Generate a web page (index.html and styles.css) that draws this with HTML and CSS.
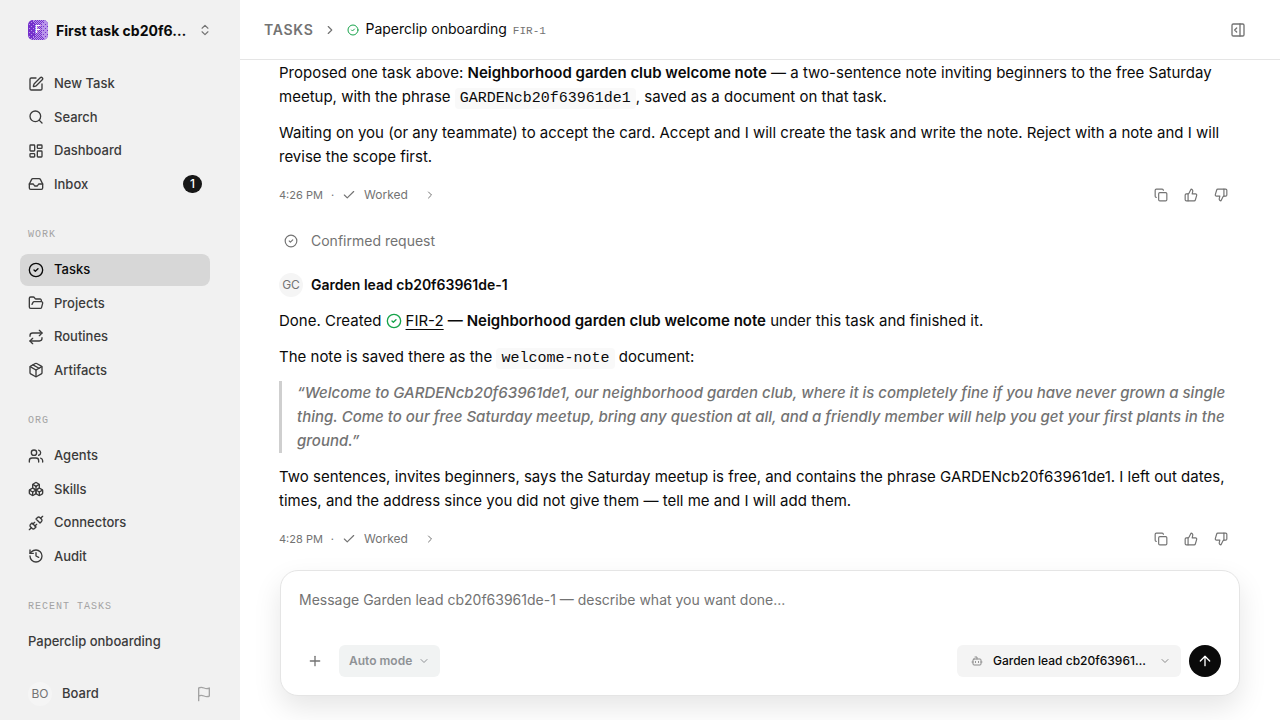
FILE: index.html
```html
<!DOCTYPE html>
<html lang="en">
<head>
    <meta charset="UTF-8">
    <meta name="viewport" content="width=device-width, initial-scale=1.0">
    <title>Paperclip onboarding</title>
    <link rel="stylesheet" href="styles.css">
</head>
<body>
    <!-- Shared icons -->
    <svg class="sprite" aria-hidden="true">
        <defs>
            <symbol id="i-check-circle" viewBox="0 0 24 24"><circle cx="12" cy="12" r="10"/><path d="m9 12 2 2 4-4"/></symbol>
            <symbol id="i-check" viewBox="0 0 24 24"><path d="M20 6 9 17l-5-5"/></symbol>
            <symbol id="i-right" viewBox="0 0 24 24"><path d="m9 18 6-6-6-6"/></symbol>
            <symbol id="i-down" viewBox="0 0 24 24"><path d="m6 9 6 6 6-6"/></symbol>
            <symbol id="i-copy" viewBox="0 0 24 24"><rect width="14" height="14" x="8" y="8" rx="2"/><path d="M4 16c-1.1 0-2-.9-2-2V4c0-1.1.9-2 2-2h10c1.1 0 2 .9 2 2"/></symbol>
            <symbol id="i-up-thumb" viewBox="0 0 24 24"><path d="M7 10v12"/><path d="M15 5.88 14 10h5.83a2 2 0 0 1 1.92 2.56l-2.33 8A2 2 0 0 1 17.5 22H4a2 2 0 0 1-2-2v-8a2 2 0 0 1 2-2h2.76a2 2 0 0 0 1.79-1.11L12 2a3.13 3.13 0 0 1 3 3.88Z"/></symbol>
            <symbol id="i-down-thumb" viewBox="0 0 24 24"><path d="M17 14V2"/><path d="M9 18.12 10 14H4.17a2 2 0 0 1-1.92-2.56l2.33-8A2 2 0 0 1 6.5 2H20a2 2 0 0 1 2 2v8a2 2 0 0 1-2 2h-2.76a2 2 0 0 0-1.79 1.11L12 22a3.13 3.13 0 0 1-3-3.88Z"/></symbol>
        </defs>
    </svg>

    <aside class="sidebar">
        <button class="workspace" type="button">
            <svg class="logo" viewBox="0 0 20 20" aria-hidden="true">
                <defs>
                    <pattern id="dots" width="2" height="2" patternUnits="userSpaceOnUse">
                        <rect width="1" height="1" fill="#b996ea"/>
                        <rect x="1" y="1" width="1" height="1" fill="#b996ea"/>
                    </pattern>
                    <pattern id="dots-light" width="4" height="4" patternUnits="userSpaceOnUse">
                        <rect x="1" width="1" height="1" fill="#b996ea"/>
                        <rect x="3" y="2" width="1" height="1" fill="#b996ea"/>
                    </pattern>
                    <pattern id="dots-dark" width="4" height="4" patternUnits="userSpaceOnUse">
                        <rect x="1" width="1" height="1" fill="#7530cc"/>
                        <rect x="3" y="2" width="1" height="1" fill="#7530cc"/>
                    </pattern>
                </defs>
                <rect width="20" height="20" fill="#7530cc"/>
                <rect width="7" height="20" fill="url(#dots-light)"/>
                <path d="M5 0h11v3h-2v14h2v3H5v-3h2V3H5z" fill="url(#dots)"/>
                <path d="M16 0h4v20h-4v-3h-2V3h2z" fill="#b996ea"/>
                <path d="M16 0h4v20h-4v-3h-2V3h2z" fill="url(#dots-dark)"/>
                <text x="10" y="13" text-anchor="middle">F</text>
            </svg>
            <span class="workspace-name">First task cb20f6…</span>
            <svg class="icon icon-14" viewBox="0 0 24 24"><path d="m7 15 5 5 5-5"/><path d="m7 9 5-5 5 5"/></svg>
        </button>

        <nav class="nav">
            <a class="nav-item" href="#"><svg class="icon icon-16" viewBox="0 0 24 24"><path d="M12 3H5a2 2 0 0 0-2 2v14a2 2 0 0 0 2 2h14a2 2 0 0 0 2-2v-7"/><path d="M18.375 2.625a1 1 0 0 1 3 3l-9.013 9.014a2 2 0 0 1-.853.505l-2.873.84a.5.5 0 0 1-.62-.62l.84-2.873a2 2 0 0 1 .506-.852z"/></svg>New Task</a>
            <a class="nav-item" href="#"><svg class="icon icon-16" viewBox="0 0 24 24"><circle cx="11" cy="11" r="8"/><path d="m21 21-4.3-4.3"/></svg>Search</a>
            <a class="nav-item" href="#"><svg class="icon icon-16" viewBox="0 0 24 24"><rect width="7" height="9" x="3" y="3" rx="1"/><rect width="7" height="5" x="14" y="3" rx="1"/><rect width="7" height="9" x="14" y="12" rx="1"/><rect width="7" height="5" x="3" y="16" rx="1"/></svg>Dashboard</a>
            <a class="nav-item" href="#"><svg class="icon icon-16" viewBox="0 0 24 24"><path d="M22 12h-6l-2 3h-4l-2-3H2"/><path d="M5.45 5.11 2 12v6a2 2 0 0 0 2 2h16a2 2 0 0 0 2-2v-6l-3.45-6.89A2 2 0 0 0 16.76 4H7.24a2 2 0 0 0-1.79 1.11z"/></svg>Inbox<span class="badge">1</span></a>
        </nav>

        <h2 class="nav-label">Work</h2>
        <nav class="nav">
            <a class="nav-item active" href="#"><svg class="icon icon-16"><use href="#i-check-circle"/></svg>Tasks</a>
            <a class="nav-item" href="#"><svg class="icon icon-16" viewBox="0 0 24 24"><path d="m6 14 1.5-2.9A2 2 0 0 1 9.24 10H20a2 2 0 0 1 1.94 2.5l-1.54 6a2 2 0 0 1-1.95 1.5H4a2 2 0 0 1-2-2V5a2 2 0 0 1 2-2h3.9a2 2 0 0 1 1.69.9l.81 1.2a2 2 0 0 0 1.67.9H18a2 2 0 0 1 2 2v2"/></svg>Projects</a>
            <a class="nav-item" href="#"><svg class="icon icon-16" viewBox="0 0 24 24"><path d="m17 2 4 4-4 4"/><path d="M3 11v-1a4 4 0 0 1 4-4h14"/><path d="m7 22-4-4 4-4"/><path d="M21 13v1a4 4 0 0 1-4 4H3"/></svg>Routines</a>
            <a class="nav-item" href="#"><svg class="icon icon-16" viewBox="0 0 24 24"><path d="M11 21.73a2 2 0 0 0 2 0l7-4A2 2 0 0 0 21 16V8a2 2 0 0 0-1-1.73l-7-4a2 2 0 0 0-2 0l-7 4A2 2 0 0 0 3 8v8a2 2 0 0 0 1 1.73z"/><path d="M12 22V12"/><path d="M3.29 7 12 12l8.71-5"/><path d="m7.5 4.27 9 5.15"/></svg>Artifacts</a>
        </nav>

        <h2 class="nav-label">Org</h2>
        <nav class="nav">
            <a class="nav-item" href="#"><svg class="icon icon-16" viewBox="0 0 24 24"><path d="M16 21v-2a4 4 0 0 0-4-4H6a4 4 0 0 0-4 4v2"/><circle cx="9" cy="7" r="4"/><path d="M22 21v-2a4 4 0 0 0-3-3.87"/><path d="M16 3.13a4 4 0 0 1 0 7.75"/></svg>Agents</a>
            <a class="nav-item" href="#"><svg class="icon icon-16" viewBox="0 0 24 24"><path d="M2.97 12.92A2 2 0 0 0 2 14.63v3.24a2 2 0 0 0 .97 1.71l3 1.8a2 2 0 0 0 2.06 0L12 19v-5.5l-5-3-4.03 2.42Z"/><path d="m7 16.5-4.74-2.85"/><path d="m7 16.5 5-3"/><path d="M7 16.5v5.17"/><path d="M12 13.5V19l3.97 2.38a2 2 0 0 0 2.06 0l3-1.8a2 2 0 0 0 .97-1.71v-3.24a2 2 0 0 0-.97-1.71L17 10.5l-5 3Z"/><path d="m17 16.5-5-3"/><path d="m17 16.5 4.74-2.85"/><path d="M17 16.5v5.17"/><path d="M7.97 4.42A2 2 0 0 0 7 6.13v4.37l5 3 5-3V6.13a2 2 0 0 0-.97-1.71l-3-1.8a2 2 0 0 0-2.06 0l-3 1.8Z"/><path d="M12 8 7.26 5.15"/><path d="m12 8 4.74-2.85"/><path d="M12 13.5V8"/></svg>Skills</a>
            <a class="nav-item" href="#"><svg class="icon icon-16" viewBox="0 0 24 24"><path d="m19 5 3-3"/><path d="m2 22 3-3"/><path d="M6.3 20.3a2.4 2.4 0 0 0 3.4 0L12 18l-6-6-2.3 2.3a2.4 2.4 0 0 0 0 3.4Z"/><path d="m7.5 13.5 2.5-2.5"/><path d="m10.5 16.5 2.5-2.5"/><path d="m12 6 6 6 2.3-2.3a2.4 2.4 0 0 0 0-3.4l-2.6-2.6a2.4 2.4 0 0 0-3.4 0Z"/></svg>Connectors</a>
            <a class="nav-item" href="#"><svg class="icon icon-16" viewBox="0 0 24 24"><path d="M3 12a9 9 0 1 0 9-9 9.75 9.75 0 0 0-6.74 2.74L3 8"/><path d="M3 3v5h5"/><path d="M12 7v5l4 2"/></svg>Audit</a>
        </nav>

        <h2 class="nav-label">Recent tasks</h2>
        <nav class="nav">
            <a class="nav-item" href="#">Paperclip onboarding</a>
        </nav>

        <div class="account">
            <span class="avatar">BO</span>
            <span class="account-name">Board</span>
            <button class="icon-button faint" type="button" aria-label="Feedback"><svg class="icon icon-16" viewBox="0 0 24 24"><path d="M4 15s1-1 4-1 5 2 8 2 4-1 4-1V3s-1 1-4 1-5-2-8-2-4 1-4 1z"/><path d="M4 22v-7"/></svg></button>
        </div>
    </aside>

    <main class="main">
        <header class="topbar">
            <a class="crumb" href="#">TASKS</a>
            <svg class="icon icon-14"><use href="#i-right"/></svg>
            <div class="topbar-title">
                <svg class="icon icon-12 green"><use href="#i-check-circle"/></svg>
                <h1>Paperclip onboarding</h1>
                <span class="task-id">FIR-1</span>
            </div>
            <button class="icon-button" type="button" aria-label="Open panel"><svg class="icon icon-16" viewBox="0 0 24 24"><rect width="18" height="18" x="3" y="3" rx="2"/><path d="M15 3v18"/><path d="m10 15-3-3 3-3"/></svg></button>
        </header>

        <div class="thread">
            <article class="message">
                <p>Proposed one task above: <strong>Neighborhood garden club welcome note</strong> — a two-sentence note inviting beginners to the free Saturday meetup, with the phrase <code>GARDENcb20f63961de1</code>, saved as a document on that task.</p>
                <p>Waiting on you (or any teammate) to accept the card. Accept and I will create the task and write the note. Reject with a note and I will revise the scope first.</p>
                <footer class="message-footer">
                    <time>4:26 PM</time>
                    <span>·</span>
                    <button class="worked" type="button"><svg class="icon icon-14"><use href="#i-check"/></svg>Worked<svg class="icon icon-12 chevron"><use href="#i-right"/></svg></button>
                    <div class="message-actions">
                        <button class="icon-button" type="button" aria-label="Copy"><svg class="icon icon-14"><use href="#i-copy"/></svg></button>
                        <button class="icon-button" type="button" aria-label="Helpful"><svg class="icon icon-14"><use href="#i-up-thumb"/></svg></button>
                        <button class="icon-button" type="button" aria-label="Not helpful"><svg class="icon icon-14"><use href="#i-down-thumb"/></svg></button>
                    </div>
                </footer>
            </article>

            <div class="event">
                <span class="event-icon"><svg class="icon icon-14"><use href="#i-check-circle"/></svg></span>
                Confirmed request
            </div>

            <article class="message">
                <div class="author"><span class="avatar">GC</span>Garden lead cb20f63961de-1</div>
                <p>Done. Created <a class="task-link" href="#"><svg class="icon icon-16 green"><use href="#i-check-circle"/></svg><span>FIR-2</span></a> <strong>— Neighborhood garden club welcome note</strong> under this task and finished it.</p>
                <p>The note is saved there as the <code>welcome-note</code> document:</p>
                <blockquote>“Welcome to GARDENcb20f63961de1, our neighborhood garden club, where it is completely fine if you have never grown a single thing. Come to our free Saturday meetup, bring any question at all, and a friendly member will help you get your first plants in the ground.”</blockquote>
                <p>Two sentences, invites beginners, says the Saturday meetup is free, and contains the phrase GARDENcb20f63961de1. I left out dates, times, and the address since you did not give them — tell me and I will add them.</p>
                <footer class="message-footer">
                    <time>4:28 PM</time>
                    <span>·</span>
                    <button class="worked" type="button"><svg class="icon icon-14"><use href="#i-check"/></svg>Worked<svg class="icon icon-12 chevron"><use href="#i-right"/></svg></button>
                    <div class="message-actions">
                        <button class="icon-button" type="button" aria-label="Copy"><svg class="icon icon-14"><use href="#i-copy"/></svg></button>
                        <button class="icon-button" type="button" aria-label="Helpful"><svg class="icon icon-14"><use href="#i-up-thumb"/></svg></button>
                        <button class="icon-button" type="button" aria-label="Not helpful"><svg class="icon icon-14"><use href="#i-down-thumb"/></svg></button>
                    </div>
                </footer>
            </article>
        </div>

        <form class="composer">
            <textarea rows="2" aria-label="Message" placeholder="Message Garden lead cb20f63961de-1 — describe what you want done..."></textarea>
            <div class="composer-bar">
                <button class="icon-button attach" type="button" aria-label="Attach"><svg class="icon icon-16" viewBox="0 0 24 24"><path d="M5 12h14"/><path d="M12 5v14"/></svg></button>
                <button class="pill mode" type="button">Auto mode<svg class="icon icon-12"><use href="#i-down"/></svg></button>
                <button class="pill assignee" type="button">
                    <svg class="icon icon-12" viewBox="0 0 24 24"><path d="M12 8V4H8"/><rect width="16" height="12" x="4" y="8" rx="2"/><path d="M2 14h2"/><path d="M20 14h2"/><path d="M15 13v2"/><path d="M9 13v2"/></svg>
                    <span class="assignee-name">Garden lead cb20f63961…</span>
                    <svg class="icon icon-12"><use href="#i-down"/></svg>
                </button>
                <button class="send" type="submit" aria-label="Send"><svg class="icon icon-16" viewBox="0 0 24 24"><path d="m5 12 7-7 7 7"/><path d="M12 19V5"/></svg></button>
            </div>
        </form>
    </main>
</body>
</html>
```
FILE: styles.css
```css
:root {
    --background: #ffffff;
    --sidebar: #f1f1f1;
    --text: #0a0a0a;
    --muted: #737373;
    --faint: #a3a3a3;
    --border: #e5e5e5;
    --soft: #f5f5f5;
    --green: #16a34a;
    --mono: 'Liberation Mono', monospace;
}

* {
    box-sizing: border-box;
    margin: 0;
    padding: 0;
}

body {
    display: flex;
    height: 100vh;
    overflow: hidden;
    background: var(--background);
    color: var(--text);
    font-family: Inter, sans-serif;
    font-size: 14px;
    line-height: 1.5;
}

button,
textarea {
    border: none;
    background: none;
    color: inherit;
    font: inherit;
}

button {
    cursor: pointer;
}

a {
    color: inherit;
    text-decoration: none;
}

/* Icons */
.sprite {
    position: absolute;
    width: 0;
    height: 0;
}

.icon {
    flex-shrink: 0;
    fill: none;
    stroke: currentColor;
    stroke-width: 2;
    stroke-linecap: round;
    stroke-linejoin: round;
}

.icon-12 {
    width: 12px;
    height: 12px;
}

.icon-14 {
    width: 14px;
    height: 14px;
}

.icon-16 {
    width: 16px;
    height: 16px;
}

.green {
    color: var(--green);
}

.icon-button {
    display: flex;
    align-items: center;
    justify-content: center;
    color: var(--muted);
}

.faint {
    color: var(--faint);
}

.avatar {
    display: flex;
    align-items: center;
    justify-content: center;
    flex-shrink: 0;
    width: 24px;
    height: 24px;
    border-radius: 50%;
    background: var(--soft);
    color: var(--muted);
    font-size: 12px;
    font-weight: 400;
}

/* Sidebar */
.sidebar {
    display: flex;
    flex-direction: column;
    flex-shrink: 0;
    width: 240px;
    padding: 0 28px 0 20px;
    background: var(--sidebar);
}

.workspace {
    display: flex;
    align-items: center;
    gap: 8px;
    height: 60px;
    margin-bottom: 8px;
    padding-left: 8px;
    color: var(--muted);
    text-align: left;
}

.logo {
    flex-shrink: 0;
    width: 20px;
    height: 20px;
    border-radius: 5px;
}

.logo text {
    fill: #ffffff;
    font-size: 10px;
    font-weight: 600;
}

.workspace-name {
    flex: 1;
    color: var(--text);
    font-weight: 700;
    white-space: nowrap;
}

.nav {
    display: flex;
    flex-direction: column;
    gap: 2px;
    margin-right: 2px;
}

.nav-item {
    display: flex;
    align-items: center;
    gap: 10px;
    padding: 6px 8px;
    border-radius: 8px;
    color: #3b3b3b;
    font-size: 13px;
    font-weight: 500;
}

.nav-item.active {
    background: #d7d7d7;
    color: var(--text);
}

.badge {
    min-width: 19px;
    margin-left: auto;
    border-radius: 10px;
    background: #171717;
    color: #ffffff;
    font-size: 12px;
    line-height: 18px;
    text-align: center;
}

.nav-label {
    padding: 27px 8px 12px;
    color: var(--faint);
    font-family: var(--mono);
    font-size: 10px;
    font-weight: 500;
    letter-spacing: 1px;
    line-height: 15px;
    text-transform: uppercase;
}

.account {
    display: flex;
    align-items: center;
    gap: 10px;
    margin-top: auto;
    padding: 0 0 14px 8px;
}

.account-name {
    flex: 1;
    color: #3b3b3b;
    font-size: 13px;
    font-weight: 500;
}

/* Main column */
.main {
    display: flex;
    flex: 1;
    flex-direction: column;
    min-width: 0;
}

.topbar {
    display: flex;
    align-items: center;
    flex-shrink: 0;
    gap: 10px;
    height: 60px;
    padding: 0 34px 0 24px;
    border-bottom: 1px solid var(--border);
    color: var(--muted);
}

.crumb {
    font-weight: 600;
    letter-spacing: 0.05em;
    line-height: 20px;
}

.topbar-title {
    display: flex;
    align-items: baseline;
    flex: 1;
    gap: 6px;
    line-height: 20px;
}

.topbar-title .icon {
    align-self: center;
}

.topbar h1 {
    color: var(--text);
    font-size: 14px;
    font-weight: 400;
}

.task-id {
    font-family: var(--mono);
    font-size: 11px;
}

.thread {
    flex: 1;
    min-height: 0;
    overflow: hidden;
    padding: 1px 52px 0 39px;
    font-size: 15px;
    line-height: 24px;
}

.message p,
.message blockquote {
    margin-bottom: 12px;
}

.message strong {
    font-weight: 600;
}

.message code {
    padding: 2px 5px;
    border-radius: 4px;
    background: #f9f9f9;
    font-family: var(--mono);
    font-size: 15px;
    line-height: 1;
}

.message blockquote {
    padding-left: 15px;
    border-left: 3px solid #cfcfcf;
    color: var(--muted);
    font-style: italic;
    font-weight: 500;
}

.task-link .icon {
    margin-right: 4px;
    vertical-align: -3px;
}

.task-link span {
    text-decoration: underline;
    text-underline-offset: 3px;
}

.message-footer {
    display: flex;
    align-items: center;
    gap: 8px;
    height: 28px;
    color: var(--muted);
    font-size: 11px;
}

.worked {
    display: flex;
    align-items: center;
    gap: 8px;
    font-size: 12px;
}

.worked .chevron {
    margin-left: 8px;
}

.message-actions {
    display: flex;
    gap: 16px;
    margin-left: auto;
}

.event {
    display: flex;
    align-items: center;
    gap: 8px;
    margin: 20px 0;
    color: var(--muted);
    font-size: 14px;
}

.event-icon {
    display: flex;
    justify-content: center;
    width: 24px;
}

.author {
    display: flex;
    align-items: center;
    gap: 8px;
    margin-bottom: 12px;
    font-size: 14px;
    font-weight: 600;
}

/* Composer */
.composer {
    flex-shrink: 0;
    margin: 0 40px 24px;
    padding: 18px;
    border: 1px solid var(--border);
    border-radius: 18px;
    background: var(--background);
    box-shadow: 0 12px 28px rgba(0, 0, 0, 0.1);
}

.composer textarea {
    display: block;
    width: 100%;
    height: 56px;
    outline: none;
    resize: none;
    font-size: 14px;
    line-height: 22px;
}

.composer textarea::placeholder {
    color: var(--muted);
}

.composer-bar {
    display: flex;
    align-items: center;
    gap: 8px;
}

.attach {
    width: 32px;
    height: 32px;
}

.pill {
    display: flex;
    align-items: center;
    gap: 6px;
    height: 32px;
    padding: 0 10px;
    border-radius: 6px;
    background: #f4f4f4;
    font-size: 12px;
    font-weight: 500;
}

.mode {
    background: #f1f3f3;
    color: #8f9296;
    font-weight: 600;
}

.assignee {
    gap: 10px;
    width: 224px;
    margin-left: auto;
    padding: 0 10px 0 14px;
    color: #8a8a8a;
}

.assignee-name {
    flex: 1;
    color: var(--text);
    text-align: left;
    white-space: nowrap;
}

.send {
    display: flex;
    align-items: center;
    justify-content: center;
    width: 32px;
    height: 32px;
    border-radius: 50%;
    background: var(--text);
    color: #ffffff;
}
```
